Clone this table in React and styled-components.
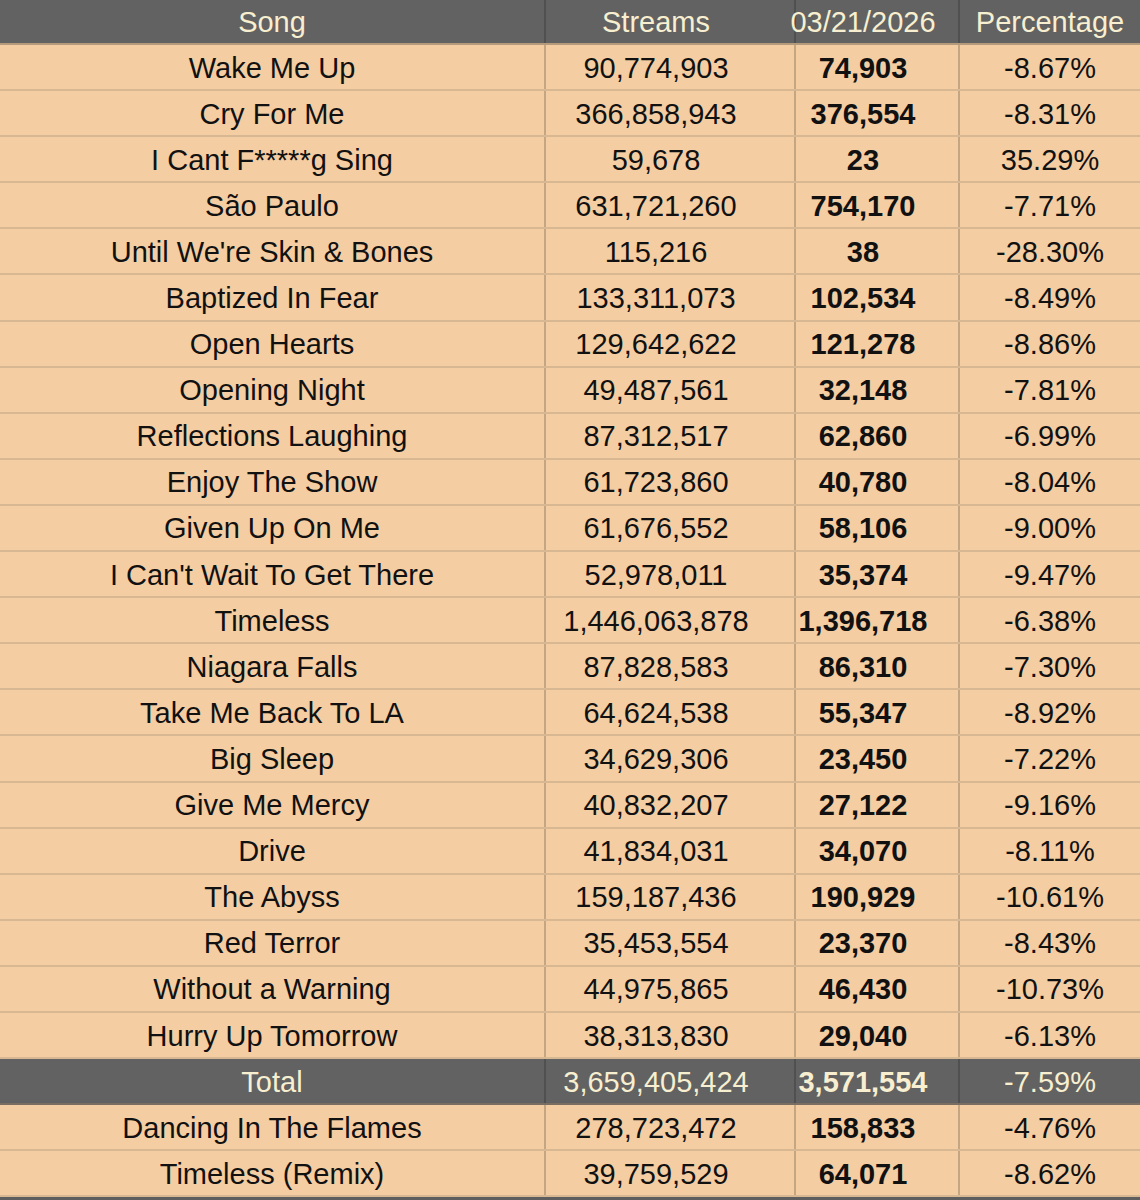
import React from "react";
import styled, { createGlobalStyle } from "styled-components";

const Global = createGlobalStyle`
  html, body {
    margin: 0;
    padding: 0;
    background: #5e5e5e;
  }
  * { box-sizing: border-box; }
`;

const rows = [
  ["Wake Me Up", "90,774,903", "74,903", "-8.67%"],
  ["Cry For Me", "366,858,943", "376,554", "-8.31%"],
  ["I Cant F*****g Sing", "59,678", "23", "35.29%"],
  ["São Paulo", "631,721,260", "754,170", "-7.71%"],
  ["Until We're Skin & Bones", "115,216", "38", "-28.30%"],
  ["Baptized In Fear", "133,311,073", "102,534", "-8.49%"],
  ["Open Hearts", "129,642,622", "121,278", "-8.86%"],
  ["Opening Night", "49,487,561", "32,148", "-7.81%"],
  ["Reflections Laughing", "87,312,517", "62,860", "-6.99%"],
  ["Enjoy The Show", "61,723,860", "40,780", "-8.04%"],
  ["Given Up On Me", "61,676,552", "58,106", "-9.00%"],
  ["I Can't Wait To Get There", "52,978,011", "35,374", "-9.47%"],
  ["Timeless", "1,446,063,878", "1,396,718", "-6.38%"],
  ["Niagara Falls", "87,828,583", "86,310", "-7.30%"],
  ["Take Me Back To LA", "64,624,538", "55,347", "-8.92%"],
  ["Big Sleep", "34,629,306", "23,450", "-7.22%"],
  ["Give Me Mercy", "40,832,207", "27,122", "-9.16%"],
  ["Drive", "41,834,031", "34,070", "-8.11%"],
  ["The Abyss", "159,187,436", "190,929", "-10.61%"],
  ["Red Terror", "35,453,554", "23,370", "-8.43%"],
  ["Without a Warning", "44,975,865", "46,430", "-10.73%"],
  ["Hurry Up Tomorrow", "38,313,830", "29,040", "-6.13%"],
];

const extra = [
  ["Dancing In The Flames", "278,723,472", "158,833", "-4.76%"],
  ["Timeless (Remix)", "39,759,529", "64,071", "-8.62%"],
];

const Sheet = styled.div`
  width: 1140px;
  font-family: "Liberation Sans", Arial, sans-serif;
  font-size: 29px;
`;

const Row = styled.div`
  display: grid;
  grid-template-columns: 544px 250px 164px 182px;
  height: ${(p) => (p.$head ? "45px" : "46.1px")};
  background: ${(p) => (p.$dark ? "#626262" : "#f4cda3")};
  color: ${(p) => (p.$dark ? "#f7efd0" : "#111")};
  border-bottom: 2px solid ${(p) => (p.$head ? "#b59a7b" : p.$dark ? "#7a6e62" : "#d8b892")};
`;

const Cell = styled.div`
  display: flex;
  align-items: center;
  justify-content: center;
  white-space: nowrap;
  line-height: 1;
  padding-top: 2px;
  padding-right: ${(p) => (p.$shift ? "28px" : "0")};
  font-weight: ${(p) => (p.$bold ? 700 : 400)};
  border-left: 2px solid ${(p) => (p.$dark ? "#505050" : "#c4a782")};
  &:first-child {
    border-left: none;
  }
`;

const DataRow = ({ r, dark, head }) => (
  <Row $dark={dark} $head={head}>
    <Cell $dark={dark}>{r[0]}</Cell>
    <Cell $dark={dark} $shift>{r[1]}</Cell>
    <Cell $dark={dark} $shift $bold={!head}>{r[2]}</Cell>
    <Cell $dark={dark}>{r[3]}</Cell>
  </Row>
);

export default function App() {
  return (
    <>
      <Global />
      <Sheet>
        <DataRow r={["Song", "Streams", "03/21/2026", "Percentage"]} dark head />
        {rows.map((r) => (
          <DataRow key={r[0]} r={r} />
        ))}
        <DataRow r={["Total", "3,659,405,424", "3,571,554", "-7.59%"]} dark />
        {extra.map((r) => (
          <DataRow key={r[0]} r={r} />
        ))}
      </Sheet>
    </>
  );
}
